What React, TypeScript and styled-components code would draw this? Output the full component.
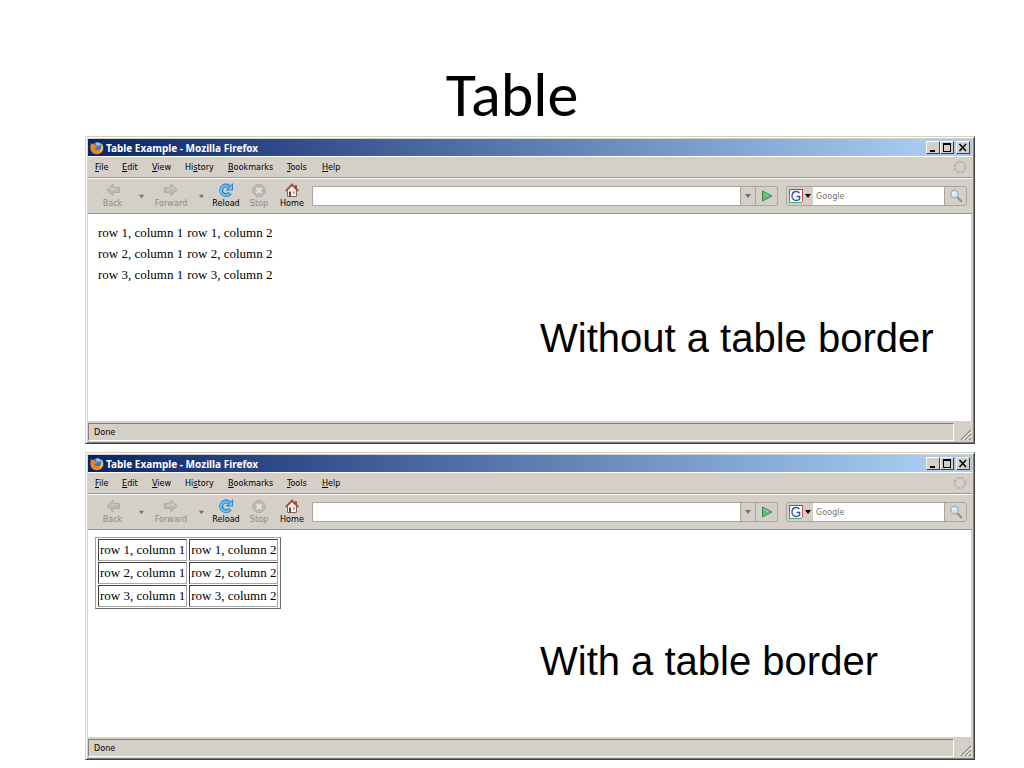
import React, { useId } from "react";
import styled, { createGlobalStyle } from "styled-components";

const GlobalStyle = createGlobalStyle`
  * { box-sizing: border-box; }
  body { margin: 0; background: #fff; color: #000; }
  button, input { font: inherit; margin: 0; padding: 0; }
`;

const face = "#d4d0c8";
const uiFont = `"DejaVu Sans Condensed", "DejaVu Sans", sans-serif`;

const Slide = styled.main`
  display: flex;
  flex-direction: column;
  gap: 8px;
  padding: 56px 49px 8px 85px;
`;

const Heading = styled.h1`
  margin: 0 36px 0 0;
  height: 72px;
  line-height: 78px;
  font-family: Carlito, Lato, sans-serif;
  font-size: 62px;
  font-weight: 400;
  text-align: center;
`;

const Frame = styled.section`
  display: flex;
  flex-direction: column;
  background: ${face};
  border: 1px solid;
  border-color: #d4d0c8 #404040 #404040 #d4d0c8;
  box-shadow: inset 1px 1px #fff, inset -1px -1px #808080;
  padding: 2px;
  font-family: ${uiFont};
  font-size: 9px;
`;

const TitleBar = styled.header`
  display: flex;
  align-items: center;
  height: 17px;
  padding: 0 2px;
  gap: 2px;
  background: linear-gradient(90deg, #0a246a, #a6caf0 94%);
  color: #fff;
`;

const TitleText = styled.h2`
  margin: 0;
  flex: 1;
  font-family: "Noto Sans", ${uiFont};
  font-size: 10px;
  line-height: 16px;
  font-weight: 700;
`;

const CaptionButtons = styled.div`
  display: flex;
`;

const CaptionButton = styled.button<{ $apart?: boolean }>`
  width: 14px;
  height: 13px;
  margin-left: ${(p) => (p.$apart ? 2 : 0)}px;
  background: ${face};
  border: 1px solid;
  border-color: #fff #404040 #404040 #fff;
  display: grid;
  place-items: center;
`;

const MenuBar = styled.nav`
  display: flex;
  align-items: center;
  height: 22px;
  padding: 0 5px 0 7px;
  border-top: 1px solid #fff;
  border-bottom: 1px solid #9a968e;
`;

const MenuItem = styled.button<{ $width: number }>`
  width: ${(p) => p.$width}px;
  border: 0;
  background: none;
  text-align: left;
  line-height: 16px;
  white-space: nowrap;
  color: #000;
`;

const Throbber = styled.svg`
  margin-left: auto;
`;

const ToolBar = styled.div`
  display: flex;
  align-items: center;
  height: 36px;
  padding: 0 5px 0 7px;
  border-top: 1px solid #fff;
  border-bottom: 1px solid #9a968e;
`;

const ToolButton = styled.button<{ $width: number }>`
  width: ${(p) => p.$width}px;
  border: 0;
  background: none;
  display: flex;
  flex-direction: column;
  align-items: center;
  line-height: 11px;
  color: #000;
  &:disabled { color: #8d8a84; }
`;

const HistoryButton = styled.button`
  width: 22px;
  height: 16px;
  border: 0;
  background: none;
  display: grid;
  place-items: center;
`;

const AddressBox = styled.form`
  flex: 1;
  display: flex;
  height: 20px;
  margin: 0 8px 0 6px;
  border: 1px solid #aaa69e;
  border-radius: 0 3px 3px 0;
`;

const SearchBox = styled.form`
  display: flex;
  width: 181px;
  height: 20px;
  border: 1px solid #aaa69e;
  border-radius: 3px;
`;

const Field = styled.input`
  flex: 1;
  min-width: 0;
  border: 0;
  background: #fff;
  padding: 0 3px;
  outline: 0;
  &::placeholder { color: #77746f; opacity: 1; }
`;

const BoxButton = styled.button<{ $width: number; $line?: boolean }>`
  width: ${(p) => p.$width}px;
  border: 0;
  border-left: ${(p) => (p.$line ? "1px solid #aaa69e" : "0")};
  background: none;
  display: flex;
  align-items: center;
  justify-content: center;
  gap: 2px;
`;

const Page = styled.div`
  height: 207px;
  margin-right: 1px;
  padding: 7px;
  background: #fff;
  font-family: "Liberation Serif", serif;
`;

const DataTable = styled.table<{ $bordered: boolean }>`
  font-size: 13px;
  line-height: ${(p) => (p.$bordered ? 18 : 17)}px;
  border-collapse: separate;
  border-spacing: ${(p) => (p.$bordered ? "2px 1px" : "2px")};
  border: ${(p) => (p.$bordered ? "1px solid" : "0")};
  border-color: #a0a0a0 #686868 #686868 #a0a0a0;
  td {
    padding: 1px;
    white-space: nowrap;
    border: ${(p) => (p.$bordered ? "1px solid" : "0")};
    border-color: #404040 #a8a8a8 #a8a8a8 #404040;
  }
`;

const Caption = styled.p`
  margin: 29px 0 0 445px;
  font-family: "Liberation Sans", Arial, sans-serif;
  font-size: 40px;
  line-height: 46px;
  white-space: nowrap;
`;

const StatusBar = styled.footer`
  display: flex;
  justify-content: space-between;
  align-items: flex-end;
  height: 20px;
  padding-top: 2px;
`;

const StatusText = styled.div`
  flex: 1;
  height: 18px;
  margin-right: 6px;
  padding-left: 5px;
  line-height: 16px;
  border: 1px solid;
  border-color: #808080 #fff #fff #808080;
`;

function FirefoxLogo() {
  return (
    <svg width="14" height="14" viewBox="0 0 14 14" aria-hidden="true">
      <circle cx="7.4" cy="6.6" r="5.6" fill="#3c78c4" />
      <path d="M6 2c2-1 4 0 5 2l-2 1-3-1z" fill="#8fc4ee" />
      <path d="M1 2l1.5 1.3L5 2.6 4.4 4.4l2.8.8-.8 1.4-1.9.3c.3 2 2.6 2.8 4.6 1.9C11.600 8 12 5 11 2c2.600 2 3 5.500 1.600 8C10 14 4.500 14.300 1.800 11 .2 9 0 5.500 1 2z" fill="#ee8520" />
      <path d="M11 2c2 2 2.500 5 1 7.500-.8 1.300-2 2-3.200 2.300C11.500 9.500 12 5.500 11 2z" fill="#ffd24a" />
    </svg>
  );
}

function BackIcon({ forward }: { forward?: boolean }) {
  return (
    <svg width="16" height="15" viewBox="0 0 16 15" aria-hidden="true">
      <g transform={forward ? "translate(16 0) scale(-1 1)" : undefined}>
        <path d="M8 1L2 7l6 6V9.500h6.500v-5H8z" fill="#bcb9b2" stroke="#aeaba5" strokeLinejoin="round" />
        <path d="M4 7l3-2.800V6h5" fill="none" stroke="#d2cfc8" />
      </g>
    </svg>
  );
}

function ReloadIcon() {
  return (
    <svg width="16" height="15" viewBox="0 0 16 15" aria-hidden="true">
      <path d="M12 10A4.800 4.800 0 1 1 11 3.500" fill="none" stroke="#2c86cc" strokeWidth="4" />
      <path d="M15 0v7.500H7.500z" fill="#2c86cc" />
      <path d="M11.500 10.500A4.800 4.800 0 1 1 10.500 3.500" fill="none" stroke="#6cc3f2" strokeWidth="2" />
      <path d="M14 2.500v4h-4z" fill="#7fd0f8" />
    </svg>
  );
}

function StopIcon() {
  return (
    <svg width="16" height="15" viewBox="0 0 16 15" aria-hidden="true">
      <path d="M5.500 1.500h5l3.500 3.500v5l-3.500 3.500h-5L2 10V5z" fill="#bcb9b3" stroke="#b2afa9" />
      <path d="M5.500 5l5 5m0-5l-5 5" stroke="#e6e3dd" strokeWidth="2" />
    </svg>
  );
}

function HomeIcon() {
  return (
    <svg width="16" height="15" viewBox="0 0 16 15" aria-hidden="true">
      <path d="M11 2h2v4h-2z" fill="#a65040" />
      <path d="M3.500 7v6.500h9V7L8 2.500z" fill="#f7efe6" stroke="#80665a" />
      <path d="M1.500 8L8 1.500 14.500 8" fill="none" stroke="#aa4634" strokeWidth="1.600" />
      <path d="M5 8.500h2v5H5z" fill="#774234" />
      <path d="M9 8.500h2v2H9z" fill="#6ca3cf" />
    </svg>
  );
}

function DownArrow({ color = "#75726d", size = 5 }: { color?: string; size?: number }) {
  return (
    <svg width={size} height={size} viewBox="0 0 6 6" aria-hidden="true">
      <path d="M0 1h6L3 5z" fill={color} />
    </svg>
  );
}

function GoIcon() {
  return (
    <svg width="12" height="12" viewBox="0 0 12 12" aria-hidden="true">
      <path d="M1.500 1L11 6l-9.500 5z" fill="#62b877" stroke="#3c8c53" strokeLinejoin="round" />
      <path d="M3 3.500L7.500 6" stroke="#a5dfb1" />
    </svg>
  );
}

function GoogleIcon() {
  return (
    <svg width="14" height="14" viewBox="0 0 14 14" aria-hidden="true">
      <path d="M0 0h14v14H0z" fill="#fff" />
      <path d="M0 .5h14M.5 0v7" stroke="#3c64c0" />
      <path d="M13.500 1v12" stroke="#d84a46" />
      <path d="M.5 7v7M0 13.500h13" stroke="#4fa35a" />
      <path d="M10.500 4C9.500 2.800 8.500 2.500 7.200 2.500 4.800 2.500 3 4.300 3 7s1.800 4.500 4.300 4.500c1.300 0 2.500-.4 3.300-1.200V7.500H7.500" fill="none" stroke="#2f55bd" strokeWidth="1.400" />
    </svg>
  );
}

function SearchIcon() {
  return (
    <svg width="14" height="14" viewBox="0 0 14 14" aria-hidden="true">
      <path d="M8 8l5 5" stroke="#8d9094" strokeWidth="2" />
      <circle cx="5.500" cy="5" r="3.700" fill="#d6e9f3" stroke="#a3afb8" strokeWidth="1.300" />
      <path d="M3.500 5a2 2 0 0 1 2-2" fill="none" stroke="#fff" />
    </svg>
  );
}

const menus: [string, string, string, number][] = [
  ["", "F", "ile", 27],
  ["", "E", "dit", 30],
  ["", "V", "iew", 33],
  ["Hi", "s", "tory", 43],
  ["", "B", "ookmarks", 59],
  ["", "T", "ools", 35],
  ["", "H", "elp", 24],
];

function Browser({ bordered, caption }: { bordered: boolean; caption: string }) {
  const id = useId();
  return (
    <Frame>
      <TitleBar>
        <FirefoxLogo />
        <TitleText>Table Example - Mozilla Firefox</TitleText>
        <CaptionButtons>
          <CaptionButton aria-label="Minimize">
            <svg width="10" height="9" viewBox="0 0 10 9"><path d="M2 7h5v2H2z" /></svg>
          </CaptionButton>
          <CaptionButton aria-label="Maximize">
            <svg width="10" height="9" viewBox="0 0 10 9"><path d="M1 0h8v9H1zM2 2v6h6V2z" fillRule="evenodd" /></svg>
          </CaptionButton>
          <CaptionButton aria-label="Close" $apart>
            <svg width="10" height="9" viewBox="0 0 10 9"><path d="M1.500 1l6.500 7M8 1L1.500 8" stroke="#000" strokeWidth="1.500" /></svg>
          </CaptionButton>
        </CaptionButtons>
      </TitleBar>
      <MenuBar>
        {menus.map(([before, key, after, width]) => (
          <MenuItem key={key + after} $width={width}>
            {before}<u>{key}</u>{after}
          </MenuItem>
        ))}
        <Throbber width="14" height="14" viewBox="0 0 14 14" aria-hidden="true">
          <circle cx="7" cy="7" r="5.300" fill="none" stroke="#b9b6b0" strokeWidth="2.400" strokeDasharray="3 1.160" />
        </Throbber>
      </MenuBar>
      <ToolBar>
        <ToolButton $width={35} disabled><BackIcon />Back</ToolButton>
        <HistoryButton aria-label="Back history"><DownArrow /></HistoryButton>
        <ToolButton $width={38} disabled><BackIcon forward />Forward</ToolButton>
        <HistoryButton aria-label="Forward history"><DownArrow /></HistoryButton>
        <ToolButton $width={28}><ReloadIcon />Reload</ToolButton>
        <ToolButton $width={38} disabled><StopIcon />Stop</ToolButton>
        <ToolButton $width={28}><HomeIcon />Home</ToolButton>
        <AddressBox onSubmit={(e) => e.preventDefault()}>
          <Field id={id + "url"} aria-label="Address" />
          <BoxButton type="button" $width={15} $line aria-label="Show addresses"><DownArrow size={6} /></BoxButton>
          <BoxButton $width={22} $line aria-label="Go"><GoIcon /></BoxButton>
        </AddressBox>
        <SearchBox onSubmit={(e) => e.preventDefault()}>
          <BoxButton type="button" $width={26} aria-label="Search engine"><GoogleIcon /><DownArrow color="#000" size={6} /></BoxButton>
          <Field id={id + "search"} aria-label="Search" placeholder="Google" />
          <BoxButton $width={22} $line aria-label="Search the web"><SearchIcon /></BoxButton>
        </SearchBox>
      </ToolBar>
      <Page>
        <DataTable $bordered={bordered}>
          <tbody>
            {[1, 2, 3].map((row) => (
              <tr key={row}>
                <td>{`row ${row}, column 1`}</td>
                <td>{`row ${row}, column 2`}</td>
              </tr>
            ))}
          </tbody>
        </DataTable>
        <Caption>{caption}</Caption>
      </Page>
      <StatusBar>
        <StatusText>Done</StatusText>
        <svg width="12" height="12" viewBox="0 0 12 12" aria-hidden="true">
          <path d="M1 11L11 1M5 11l6-6M9 11l2-2" stroke="#87847e" strokeWidth="1.300" />
          <path d="M2.500 11L11 2.500M6.500 11L11 6.500" stroke="#fff" />
        </svg>
      </StatusBar>
    </Frame>
  );
}

export default function App() {
  return (
    <>
      <GlobalStyle />
      <Slide>
        <Heading>Table</Heading>
        <Browser bordered={false} caption="Without a table border" />
        <Browser bordered caption="With a table border" />
      </Slide>
    </>
  );
}
